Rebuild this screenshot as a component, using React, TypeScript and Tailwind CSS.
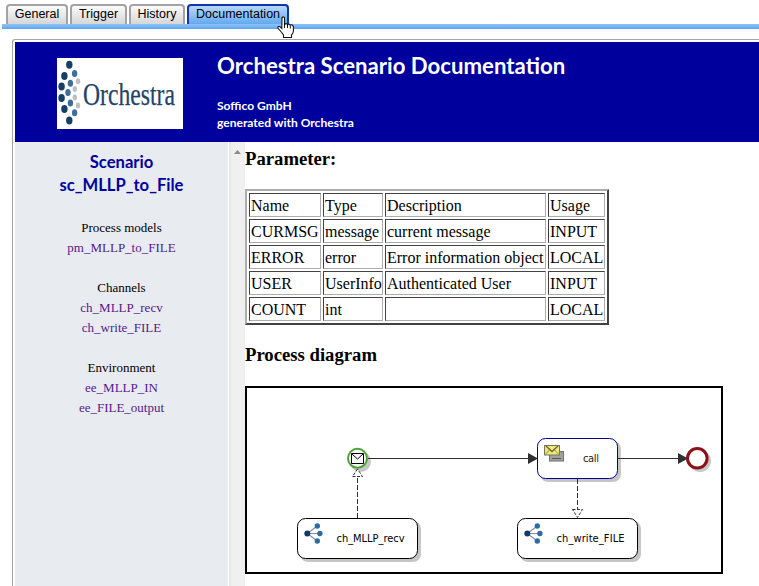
import type { ReactNode } from "react";

const tabs = [
  { label: "General", width: "w-[62px]" },
  { label: "Trigger", width: "w-[57px]" },
  { label: "History", width: "w-[56px]" },
  { label: "Documentation", width: "w-[102px]", active: true },
];

const parameters = [
  ["Name", "Type", "Description", "Usage"],
  ["CURMSG", "message", "current message", "INPUT"],
  ["ERROR", "error", "Error information object", "LOCAL"],
  ["USER", "UserInfo", "Authenticated User", "INPUT"],
  ["COUNT", "int", "", "LOCAL"],
];

const groups = [
  { title: "Process models", links: ["pm_MLLP_to_FILE"] },
  { title: "Channels", links: ["ch_MLLP_recv", "ch_write_FILE"] },
  { title: "Environment", links: ["ee_MLLP_IN", "ee_FILE_output"] },
];

const logoDots: [number, number, string][] = [
  [12.3, 6.8, "#173f66"],
  [17.6, 15.4, "#3d6f9e"],
  [7.4, 18, "#173f66"],
  [21, 23.3, "#bfbfbf"],
  [13.4, 25.2, "#3d6f9e"],
  [4.6, 28.5, "#173f66"],
  [17.8, 31, "#bfbfbf"],
  [11, 34.6, "#3d6f9e"],
  [4.6, 40, "#173f66"],
  [17.8, 39.5, "#bfbfbf"],
  [13.4, 45, "#3d6f9e"],
  [21, 47.5, "#bfbfbf"],
  [7.4, 51, "#173f66"],
  [17.6, 54.8, "#3d6f9e"],
  [12.3, 62.6, "#173f66"],
];

function Logo() {
  return (
    <svg width="126" height="71" viewBox="0 0 126 71" className="block overflow-visible bg-white">
      {logoDots.map(([x, y, fill]) => (
        <ellipse
          key={`${x}-${y}`}
          cx={x}
          cy={y}
          rx={fill === "#173f66" ? 3.2 : fill === "#bfbfbf" ? 2.2 : 2.7}
          ry={fill === "#173f66" ? 4 : fill === "#bfbfbf" ? 3 : 3.5}
          fill={fill}
        />
      ))}
      <text
        x="26"
        y="46.5"
        textLength="92"
        lengthAdjust="spacingAndGlyphs"
        fill="#1f4467"
        stroke="#1f4467"
        strokeWidth="0.25"
        className="font-['Liberation_Serif',serif] text-[32px]"
      >
        Orchestra
      </text>
    </svg>
  );
}

function Branch({ x, y }: { x: number; y: number }) {
  return (
    <g transform={`translate(${x} ${y})`}>
      <path d="M0 0L10 -7.5M0 0H12.5M0 0L10 7.5" stroke="#8793ad" strokeWidth="1.2" />
      <circle r="3" fill="#123a68" />
      <circle cx="10" cy="-7.5" r="2.7" fill="#2f6ba3" />
      <circle cx="12.6" cy="0" r="2.7" fill="#2f6ba3" />
      <circle cx="10" cy="7.5" r="2.7" fill="#2f6ba3" />
    </g>
  );
}

function Node({ x, y, w, stroke, children }: { x: number; y: number; w: number; stroke: string; children: ReactNode }) {
  return (
    <g>
      <rect x={x + 3} y={y + 3} width={w} height="41" rx="8" fill="#c6c6c6" />
      <rect x={x + 0.5} y={y + 0.5} width={w - 1} height="40" rx="8" fill="#fff" stroke={stroke} />
      {children}
    </g>
  );
}

function Diagram() {
  const label = "font-['DejaVu_Sans_Condensed','DejaVu_Sans',sans-serif] text-[11px]";
  return (
    <svg width="474" height="184" viewBox="247 388 474 184" className="block" fill="none">
      <path d="M528 453V464L538 458.5ZM678 453V464L688 458.5Z" fill="#303030" />
      <path d="M357.5 518V477M577.5 479V510" stroke="#303030" strokeDasharray="5 2" />

      <circle cx="360.5" cy="461.5" r="10.5" fill="#c6c6c6" />
      <circle cx="357.5" cy="458.3" r="9.5" fill="#fff" stroke="#48a333" strokeWidth="2" />
      <path d="M351.5 453.5H363.5V463.5H351.5ZM352 454L357.5 459L363 454" stroke="#000" />
      <path d="M357.5 469L352.5 476.5H362.5Z" fill="#fff" stroke="#303030" strokeDasharray="3 1.5" />

      <circle cx="700" cy="461" r="11" fill="#c6c6c6" />
      <circle cx="697.3" cy="458.3" r="9.8" fill="#fff" stroke="#8b1118" strokeWidth="3" />

      <Node x={537} y={438} w={81} stroke="#000099">
        <rect x="549.5" y="451.5" width="14" height="9.5" fill="#a0a0a0" stroke="#707070" />
        <path d="M552 458.5H561" stroke="#555" />
        <rect x="544.5" y="445.5" width="15" height="9.5" fill="#efea78" stroke="#777753" />
        <path d="M546 446L552 451.5L558 446" stroke="#666644" strokeWidth="1.4" />
        <path d="M545 454.5L549.5 450M559 454.5L554.5 450" stroke="#88885c" />
        <text x="583" y="462" textLength="16" fill="#222" className={label}>call</text>
      </Node>
      <path d="M368 458.5H530M618 458.5H680M577.5 479V484" stroke="#303030" />
      <Node x={297} y={518} w={121} stroke="#000">
        <Branch x={307.3} y={533.5} />
        <text x="336.5" y="542" textLength="68" fill="#000" className={label}>ch_MLLP_recv</text>
      </Node>
      <Node x={517} y={518} w={121} stroke="#000">
        <Branch x={527.3} y={533.5} />
        <text x="556.5" y="542" textLength="68" fill="#000" className={label}>ch_write_FILE</text>
      </Node>
      <path d="M572.5 509.5H582.5L577.5 517.5Z" fill="#fff" stroke="#303030" strokeDasharray="3 1.5" />
    </svg>
  );
}

export default function App() {
  return (
    <div className="relative flex h-[586px] w-[759px] flex-col overflow-hidden bg-white font-['Liberation_Serif',serif] text-black">
      <nav className="flex h-6 items-end gap-0.5 pl-1.5 pt-1 font-['Liberation_Sans',Arial,sans-serif] text-[12.5px]">
        {tabs.map((t) => (
          <button
            key={t.label}
            className={`h-5 rounded-t-[4px] border-2 border-b-0 text-center leading-[17px] whitespace-nowrap ${t.width} ${
              t.active
                ? "border-[#1236a6] bg-linear-to-b from-[#b5d8fb] to-[#62a9f3]"
                : "border-[#a3a3a3] bg-linear-to-b from-[#fbfbfb] to-[#d6d6d6]"
            }`}
          >
            <span className="relative -top-px">{t.label}</span>
          </button>
        ))}
      </nav>
      <div className="ml-0.5 h-[5px] bg-linear-to-b from-[#8fc4f8] to-[#5da5ef]" />

      <div className="mt-2.5 ml-3 flex flex-1 flex-col rounded-tl-[3px] border-t border-l border-[#a5a5a5] pt-0.5 pl-0.5">
        <header className="flex h-[100px] shrink-0 bg-[#00009c] pt-4 pl-[42px]">
          <Logo />
          <div className="ml-[34px] font-['Lato',sans-serif] font-bold text-white">
            <h1 className="-mt-[7px] text-[22.2px] leading-[30px] whitespace-nowrap">Orchestra Scenario Documentation</h1>
            <p className="mt-4 text-[12.05px] leading-[17px]">
              Soffico GmbH
              <br />
              generated with Orchestra
            </p>
          </div>
        </header>

        <div className="flex flex-1">
          <aside className="w-[213px] shrink-0 bg-[#e8ebf0] pt-[9px] text-center">
            <h2 className="font-['Lato',sans-serif] text-[16.6px] leading-[23px] font-bold text-[#00009c]">
              Scenario
              <br />
              sc_MLLP_to_File
            </h2>
            <div className="mt-[21px] flex flex-col gap-5 text-[13px] leading-5">
              {groups.map((g) => (
                <section key={g.title}>
                  <div>{g.title}</div>
                  {g.links.map((l) => (
                    <a key={l} className="block text-[#551a8b]">{l}</a>
                  ))}
                </section>
              ))}
            </div>
          </aside>
          <div className="flex w-[17px] shrink-0 justify-center border-l border-white bg-[#f0f0f0] pt-2 shadow-[inset_2px_0_0_#e6e6e6]">
            <svg width="7" height="4" viewBox="0 0 7 4" className="ml-px"><path d="M3.5 0L7 4H0Z" fill="#8b8b8b" /></svg>
          </div>
          <main className="flex-1">
            <h3 className="mt-[6px] text-[18.7px] leading-[22px] font-bold">Parameter:</h3>
            <table className="mt-[19px] w-[364px] table-fixed border-separate border-spacing-[2px] border-2 border-t-[#adadad] border-r-[#424242] border-b-[#424242] border-l-[#adadad] text-[16px] leading-5">
              <colgroup>
                <col className="w-[72px]" />
                <col className="w-[60px]" />
                <col className="w-[161px]" />
                <col className="w-[57px]" />
              </colgroup>
              <tbody>
                {parameters.map((row) => (
                  <tr key={row[0]} className="h-6">
                    {row.map((cell, i) => (
                      <td
                        key={i}
                        className="h-6 border border-t-[#424242] border-r-[#adadad] border-b-[#adadad] border-l-[#424242] px-px pt-0.5 pb-0 whitespace-nowrap"
                      >
                        {cell}
                      </td>
                    ))}
                  </tr>
                ))}
              </tbody>
            </table>
            <h3 className="mt-[19px] text-[18.7px] leading-[22px] font-bold">Process diagram</h3>
            <div className="mt-5 h-[188px] w-[478px] border-2 border-black">
              <Diagram />
            </div>
          </main>
        </div>
      </div>

      <svg className="absolute top-[16px] left-[277px]" width="18" height="23" viewBox="0 0 18 23">
        <path
          d="M5 1.5Q6.5 .2 7.5 1.8V8.5Q9.3 6.8 10.5 8.6Q12.2 7.4 13.2 9.2Q15.5 8.2 16.4 10.8V15Q16.2 17.5 14.5 19V21.5H6.5V19L3.5 15L1 12.3Q.5 9.8 3 10.7L4.8 12.5Z"
          fill="#fff"
          stroke="#111"
          strokeWidth="1.1"
        />
        <path d="M7.5 8V12M10.5 9V12M13.3 10V12.5" stroke="#111" strokeWidth="1" />
      </svg>
    </div>
  );
}
